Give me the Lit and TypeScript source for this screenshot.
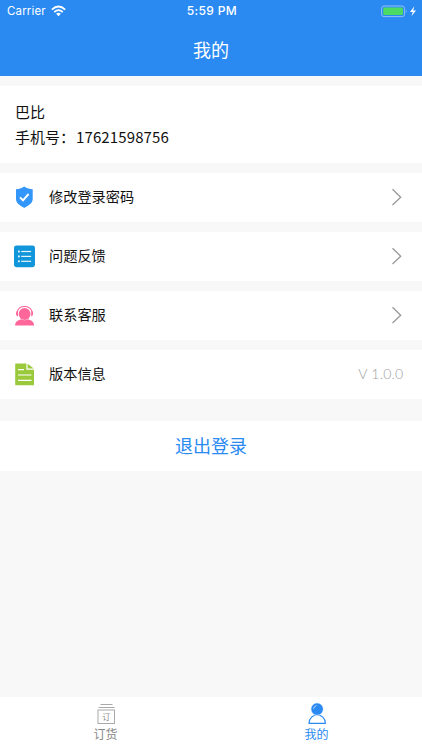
import { LitElement, html, css, svg } from "lit";
import { customElement, property } from "lit/decorators.js";

const icons = {
  shield: svg`<path d="M12.2 1.4 C9.4 3.2 7 4 4 4.3 V14 C4 18.5 8.4 20.8 12.2 22.9 C16.2 20.8 20.7 18.5 20.7 14 V4.3 C17.6 4 15 3.2 12.2 1.4Z" fill="#3296fa"/><path d="M8 12.4 L11 15.3 L16.6 9" fill="none" stroke="#fff" stroke-width="1.9"/>`,
  list: svg`<rect x="2" y="1.6" width="21" height="21.6" rx="2.4" fill="#1296db"/><g fill="#fff" fill-opacity=".9"><rect x="6" y="6.6" width="1.8" height="1.8"/><rect x="6" y="11.5" width="1.8" height="1.8"/><rect x="6" y="16.4" width="1.8" height="1.8"/><rect x="9.2" y="6.9" width="9.9" height="1.2"/><rect x="9.2" y="11.8" width="9.9" height="1.2"/><rect x="9.2" y="16.7" width="9.9" height="1.2"/></g>`,
  service: svg`<g fill="#ff6699"><circle cx="12.6" cy="11" r="5.9"/><path d="M6 7.6 V13.4 C3.4 13.4 3.4 7.6 6 7.6Z M19.2 7.6 V13.4 C21.8 13.4 21.8 7.6 19.2 7.6Z"/><path d="M3.1 22.4 C3.1 18.8 5.5 17.5 9.2 16.2 Q12.6 18.4 16 16.2 C19.7 17.5 22.1 18.8 22.1 22.4Z"/></g><path d="M5.2 8.8 C7 1.7 18.2 1.7 20 8.8" fill="none" stroke="#ff6699" stroke-width="1.1"/>`,
  document: svg`<path d="M3.7 1.6 H14.4 V7.7 H22 V22.4 Q22 23.3 21.1 23.3 H4.1 Q3.2 23.3 3.2 22.4 V2.1 Q3.2 1.6 3.7 1.6Z M15.6 1.8 L21.7 6.6 H15.6Z" fill="#9aca3c"/><path d="M6 7.6 H12 M6 13 H19.5 M6 18.4 H19.5" stroke="#fff" stroke-width="1.2"/>`,
};

@customElement("menu-row")
class MenuRow extends LitElement {
  @property() icon: keyof typeof icons = "shield";
  @property() label = "";
  @property() value = "";

  static styles = css`
    :host { display: flex; align-items: center; box-sizing: border-box; height: 49px; padding: 0 19px 1px 12px; background: #fff; }
    .icon { width: 24px; height: 24px; flex: none; }
    .label { flex: 1; margin: 0 0 3px 13px; font-size: 14.2px; line-height: 20px; color: #111; }
    .value { margin-right: -0.5px; font-size: 14px; line-height: 20px; color: #a0a0a0; font-family: Lato, sans-serif; font-weight: 300; letter-spacing: 0.25px; }
    .arrow { width: 12px; height: 18px; }
  `;

  render() {
    return html`
      <svg class="icon" viewBox="0 0 24 24">${icons[this.icon]}</svg>
      <span class="label">${this.label}</span>
      ${this.value
        ? html`<span class="value">${this.value}</span>`
        : html`<svg class="arrow" viewBox="0 0 12 18"><path d="M1.5 1.3 L9.7 9.2 L1.5 17" fill="none" stroke="#999" stroke-width="1.3"/></svg>`}
    `;
  }
}

@customElement("app-root")
class AppRoot extends LitElement {
  static styles = css`
    :host { display: flex; flex-direction: column; height: 750px; background: #f8f8f8; font-family: "Noto Sans CJK SC", sans-serif; color: #111; overflow: hidden; }
    .header { height: 76px; background: #2a8af2; color: #fff; }
    .status { display: grid; grid-template-columns: 1fr auto 1fr; align-items: center; height: 22px; padding: 0 5px 0 7px; font: 11.5px/22px Inter, sans-serif; }
    .carrier { display: flex; align-items: center; gap: 5px; letter-spacing: 0.15px; }
    .wifi { width: 15px; height: 12px; }
    .time { font-weight: 500; font-size: 12px; letter-spacing: 0.35px; }
    .battery { justify-self: end; width: 36px; height: 13px; }
    .title { text-align: center; font-size: 18px; line-height: 54px; font-weight: 400; }
    .profile { box-sizing: border-box; height: 77px; margin-top: 10px; padding: 14px 15px; background: #fff; font-size: 15px; line-height: 24.5px; }
    .phone { margin-left: 1px; letter-spacing: 0.12px; }
    .menu { display: flex; flex-direction: column; gap: 10px; margin-top: 10px; }
    .logout { height: 50px; margin-top: 22px; background: #fff; color: #2a8af2; text-align: center; font-size: 18px; line-height: 49px; font-weight: 400; }
    .tabs { display: grid; grid-template-columns: 1fr 1fr; height: 53px; margin-top: auto; background: #fff; }
    .tab { display: flex; flex-direction: column; align-items: center; padding-top: 5px; font-size: 12px; line-height: 16px; color: #888; }
    .tab.active { color: #2a8af2; }
    .tab-icon { width: 24px; height: 24px; }
    .glyph { font-size: 8px; }
  `;

  render() {
    return html`
      <div class="header">
        <div class="status">
          <div class="carrier">Carrier
            <svg class="wifi" viewBox="0 0 14 11"><g fill="none" stroke="#fff" stroke-width="1.7"><path d="M0.8 4.2 Q7 -1.6 13.2 4.2"/><path d="M3 6.5 Q7 2.8 11 6.5"/></g><path d="M4.8 8.1 Q7 6.3 9.2 8.1 L7 10.5Z" fill="#fff"/></svg>
          </div>
          <div class="time">5:59 PM</div>
          <svg class="battery" viewBox="0 0 36 13"><rect x=".6" y="1" width="23" height="10.6" rx="2.4" fill="none" stroke="#8fc0f7"/><rect x="2.2" y="2.6" width="19.8" height="7.4" rx="1" fill="#4cd964"/><path d="M24.9 4.6 Q26.6 6.3 24.9 8Z" fill="#8fc0f7"/><path d="M33.3 1.2 L29 7 H31.8 L30.4 11.3 L35 5.5 H32.2Z" fill="#fff"/></svg>
        </div>
        <div class="title">我的</div>
      </div>
      <div class="profile">
        <div>巴比</div>
        <div>手机号：<span class="phone">17621598756</span></div>
      </div>
      <div class="menu">
        <menu-row icon="shield" label="修改登录密码"></menu-row>
        <menu-row icon="list" label="问题反馈"></menu-row>
        <menu-row icon="service" label="联系客服"></menu-row>
        <menu-row icon="document" label="版本信息" value="V 1.0.0"></menu-row>
      </div>
      <div class="logout">退出登录</div>
      <div class="tabs">
        <div class="tab">
          <svg class="tab-icon" viewBox="0 0 24 24"><g fill="none" stroke="#aaa" stroke-width="1"><path d="M6.5 2.5 H18.5 M4.5 5.5 H20.5"/><rect x="4" y="8" width="16.5" height="13.5"/></g><text class="glyph" x="12.3" y="17.8" text-anchor="middle" fill="#888">订</text></svg>
          <span>订货</span>
        </div>
        <div class="tab active">
          <svg class="tab-icon" viewBox="0 0 24 24"><path d="M4 21.4 C4.2 10.2 20.2 10.2 20.4 21.4Z" fill="#fff" stroke="#2a8af2" stroke-width="1.2" stroke-linejoin="round"/><circle cx="12.1" cy="7.1" r="6.3" fill="#2a8af2" stroke="#fff" stroke-width=".8"/><path d="M8.5 6.8 Q9 4.3 11.5 3.5" fill="none" stroke="#d4e8fd" stroke-width=".8"/></svg>
          <span>我的</span>
        </div>
      </div>
    `;
  }
}
